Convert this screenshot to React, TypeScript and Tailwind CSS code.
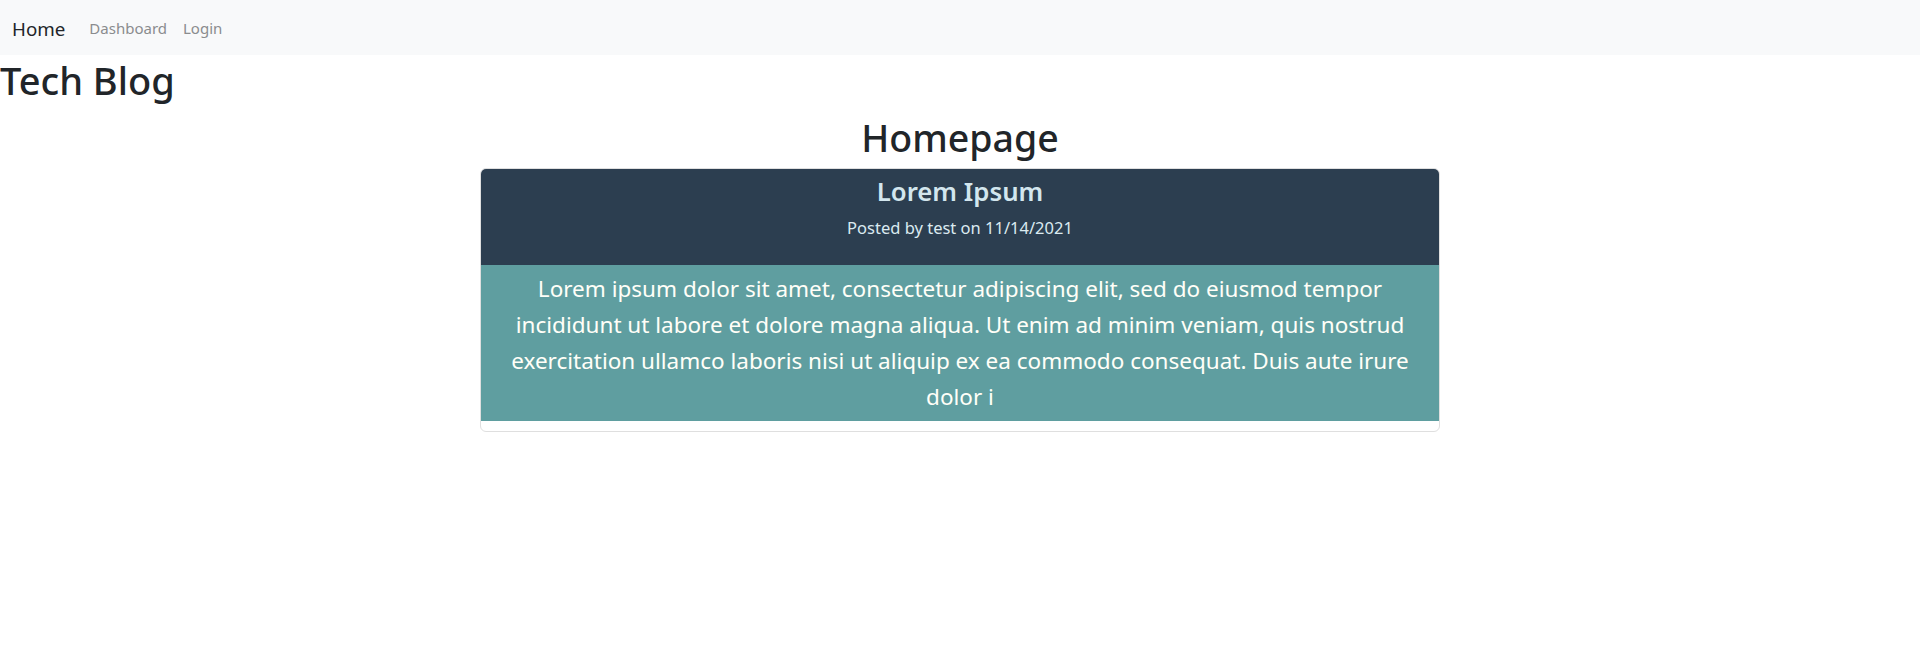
export default function App() {
  const font = { fontFamily: '"Noto Sans", sans-serif' };
  return (
    <div className="min-h-[665px] bg-white text-[#212529]" style={font}>
      <nav className="h-[55px] bg-[#f8f9fa] flex items-center px-[12px]">
        <span className="text-[18.75px] leading-[30px] mr-[16px] pt-[2px] text-[#212529]">Home</span>
        <span className="text-[15px] leading-[24px] px-[8px] text-[#8a8c8e]">Dashboard</span>
        <span className="text-[15px] leading-[24px] px-[8px] text-[#8a8c8e]">Login</span>
      </nav>
      <h1 className="text-[38px] font-medium leading-[48px] mb-[8px] pt-[1px]">Tech Blog</h1>
      <h1 className="text-[37.5px] font-medium leading-[48px] text-center pt-[2px] mb-[6px]">Homepage</h1>
      <div className="mx-auto w-[960px] border border-[#dfdfdf] rounded-[6px] overflow-hidden">
        <div className="bg-[#2c3e50] text-center pt-[5px] pb-[9px]">
          <h3 className="text-[25.75px] font-semibold leading-[34px] mb-[8px] text-[#d3e6ee]">Lorem Ipsum</h3>
          <p className="text-[16.5px] leading-[24px] mb-[16px] text-[#dbeaf0]">Posted by test on 11/14/2021</p>
        </div>
        <div className="bg-[#5f9ea0] text-center text-[22.5px] leading-[36px] text-[#fffff8] py-[6px] px-[16px]">
          Lorem ipsum dolor sit amet, consectetur adipiscing elit, sed do eiusmod tempor incididunt ut labore et dolore magna aliqua. Ut enim ad minim veniam, quis nostrud exercitation ullamco laboris nisi ut aliquip ex ea commodo consequat. Duis aute irure dolor i
        </div>
        <div className="h-[10px]"></div>
      </div>
    </div>
  );
}
